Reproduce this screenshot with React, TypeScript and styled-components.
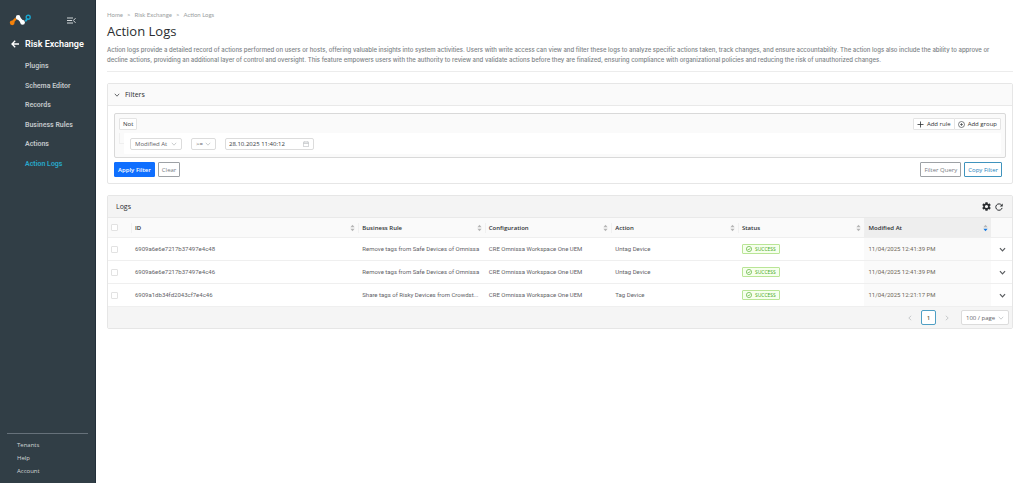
import React from "react";
import styled, { createGlobalStyle } from "styled-components";

const GlobalStyle = createGlobalStyle`
  *, *::before, *::after { box-sizing: border-box; }
  body { margin: 0; background: #fff; }
  body, button, input, select {
    font-family: "Open Sans", "Noto Sans", sans-serif;
    font-size: 6px;
    line-height: 10px;
    color: #5f6367;
  }
  button, input, select { margin: 0; cursor: pointer; }
  a { color: inherit; text-decoration: none; }
  svg { display: block; flex: none; }
`;

const Shell = styled.div`
  display: flex;
  min-height: 100vh;
`;

const Sidebar = styled.aside`
  display: flex;
  flex-direction: column;
  flex: none;
  width: 96px;
  padding: 14px 7px 7px;
  background: #313e46;
  border-right: 1px solid #23303a;
  color: #d3d7d9;
`;

const SidebarTop = styled.div`
  display: flex;
  align-items: center;
  justify-content: space-between;
  height: 12px;
  padding: 0 12px 0 2px;
`;

const IconButton = styled.button`
  display: flex;
  align-items: center;
  padding: 0;
  border: 0;
  background: none;
  color: inherit;
`;

const SectionLink = styled.a`
  display: flex;
  align-items: center;
  gap: 6px;
  height: 14px;
  margin-top: 11px;
  padding-left: 4px;
  font-family: Roboto, "Open Sans", sans-serif;
  font-size: 9px;
  line-height: 14px;
  font-weight: 600;
  color: #fff;
  white-space: nowrap;
`;

const NavList = styled.nav`
  display: flex;
  flex-direction: column;
  justify-content: space-between;
  height: 108px;
  margin-top: 10px;
  padding-left: 18px;
  font-family: Roboto, "Open Sans", sans-serif;
  font-size: 7px;
`;

const NavLink = styled.a<{ $active?: boolean }>`
  font-weight: 600;
  white-space: nowrap;
  color: ${(p) => (p.$active ? "#27a9cc" : "#c3c8cb")};
`;

const FooterNav = styled.nav`
  display: flex;
  flex-direction: column;
  gap: 3px;
  margin-top: auto;
  padding: 6px 10px 0;
  border-top: 1px solid #66717a;
`;

const Main = styled.main`
  flex: 1;
  min-width: 0;
  padding: 10px 11px;
`;

const Breadcrumb = styled.nav`
  display: flex;
  gap: 4px;
  font-family: Lato, "Open Sans", sans-serif;
  color: #9a9ea1;
`;

const Title = styled.h1`
  margin: 2px 0 5px;
  font-size: 13px;
  line-height: 18px;
  font-weight: 400;
  color: #2a2d30;
`;

const Description = styled.p`
  margin: 0;
  padding: 0 6px 6px 0;
  border-bottom: 1px solid #ececec;
  font-family: Inter, "Open Sans", sans-serif;
  font-weight: 500;
  color: #7b8185;
`;

const Panel = styled.section`
  margin-top: 11px;
  border: 1px solid #e6e6e6;
  border-radius: 2px;
  background: #fff;
`;

const PanelHeader = styled.header<{ $shade?: boolean }>`
  display: flex;
  align-items: center;
  justify-content: space-between;
  height: 22px;
  padding: 0 9px 0 ${(p) => (p.$shade ? "8px" : "6px")};
  border-bottom: 1px solid #e9e9e9;
  background: ${(p) => (p.$shade ? "#f4f4f4" : "#fafafa")};
  color: #2a2d30;
`;

const Toggle = styled.button`
  display: flex;
  align-items: center;
  gap: 5px;
  padding: 0;
  border: 0;
  background: none;
  color: #2a2d30;
`;

const PanelTitle = styled.h2`
  margin: 0;
  font-size: 7px;
  line-height: 10px;
  font-weight: 400;
`;

const FilterBody = styled.div`
  padding: 7px 6px 6px;
`;

const Builder = styled.div`
  padding: 4px 4px 3px;
  border: 1px solid #d9d9d9;
  border-radius: 2px;
  background: #fafafa;
`;

const Between = styled.div`
  display: flex;
  align-items: center;
  justify-content: space-between;
`;

const Group = styled.div<{ $gap?: number }>`
  display: flex;
  align-items: center;
  gap: ${(p) => p.$gap ?? 0}px;
`;

const SmallButton = styled.button`
  display: flex;
  align-items: center;
  gap: 3px;
  height: 12px;
  padding: 0 3px;
  border: 1px solid #e4e4e4;
  border-radius: 1px;
  background: #fff;
  color: #2f3235;
  white-space: nowrap;
  & + & { margin-left: -1px; }
`;

const RuleTree = styled.div`
  display: grid;
  grid-template-columns: 5px 1fr;
  margin-top: 3px;
`;

const Branch = styled.span`
  height: 11px;
  border-left: 1px solid #efefef;
  border-bottom: 1px solid #efefef;
`;

const Rule = styled.div`
  display: flex;
  align-items: center;
  gap: 9px;
  height: 21px;
  padding: 0 6px;
  border-radius: 1px;
  background: #fff;
`;

const Field = styled.label<{ $w: number; $tall?: boolean }>`
  display: grid;
  align-items: center;
  width: ${(p) => p.$w}px;
  height: ${(p) => (p.$tall ? 15 : 12)}px;
  border: 1px solid #dcdcdc;
  border-radius: 2px;
  background: #fff;
  color: #b4b7ba;
  & > * { grid-area: 1 / 1; }
  & > svg { justify-self: end; margin-right: 4px; pointer-events: none; }
`;

const control = `
  width: 100%;
  height: 10px;
  padding: 0 0 0 4px;
  border: 0;
  outline: 0;
  background: none;
  appearance: none;
`;

const Select = styled.select`${control}`;
const Input = styled.input`${control} padding-left: 3px; color: #35393d;`;

const ActionBar = styled(Between)`
  margin-top: 4px;
  padding-right: 4px;
`;

const tones = {
  primary: "background: #0f6fff; border-color: #0f6fff; color: #fff; font-weight: 600;",
  plain: "background: #fff; border-color: #9da1a5; color: #777b7f;",
  accent: "background: #fff; border-color: #3f93bd; color: #1c7fbd; font-weight: 500;",
};

const Button = styled.button<{ $tone: keyof typeof tones }>`
  height: 15px;
  padding: 0 3px;
  border: 1px solid;
  border-radius: 1px;
  white-space: nowrap;
  ${(p) => tones[p.$tone]}
`;

const Table = styled.table`
  width: 100%;
  table-layout: fixed;
  border-collapse: separate;
  border-spacing: 0;
`;

const Col = styled.col<{ $w?: string }>`
  width: ${(p) => p.$w ?? "auto"};
`;

const Th = styled.th<{ $sorted?: boolean }>`
  height: 20px;
  padding: 0 3px 0 0;
  border-bottom: 1px solid #efefef;
  background: ${(p) => (p.$sorted ? "#eeeeee" : "#fafafa")};
  font-weight: 600;
  text-align: left;
  color: #303336;
  &:first-child { padding-left: 3px; }
`;

const HeadCell = styled(Between)`
  height: 10px;
  padding-left: 3px;
  border-left: 1px solid #f0f0f0;
`;

const Td = styled.td<{ $sorted?: boolean }>`
  height: 23px;
  padding: 0 3px 0 4px;
  border-bottom: 1px solid #efefef;
  background: ${(p) => (p.$sorted ? "#fafafa" : "#fff")};
  font-family: Roboto, "Open Sans", sans-serif;
  color: ${(p) => (p.$sorted ? "#6e6759" : "#5f6367")};
  overflow: hidden;
  text-overflow: ellipsis;
  white-space: nowrap;
  &:first-child { padding-left: 3px; }
`;

const Check = styled.input.attrs({ type: "checkbox" })`
  display: block;
  width: 7px;
  height: 7px;
  appearance: none;
  border: 1px solid #e2e2e2;
  border-radius: 1px;
  background: #fff;
`;

const Expand = styled(IconButton)`
  width: 100%;
  height: 10px;
  justify-content: center;
  color: #5a5d60;
`;

const Tag = styled.span`
  display: flex;
  align-items: center;
  gap: 3px;
  width: max-content;
  height: 10px;
  padding: 0 3px;
  border: 1px solid #b9e596;
  border-radius: 1px;
  background: #f6ffed;
  font-family: "Open Sans", sans-serif;
  font-size: 5px;
  line-height: 8px;
  color: #47a820;
`;

const Pager = styled.footer`
  display: flex;
  align-items: center;
  justify-content: flex-end;
  gap: 11px;
  height: 21px;
  padding-right: 3px;
  background: #f5f5f5;
  color: #b4b7ba;
`;

const PageButton = styled.button`
  width: 15px;
  height: 15px;
  padding: 0;
  border: 1px solid #4f9fc4;
  border-radius: 2px;
  background: #fff;
  font-weight: 600;
  color: #6b5f45;
`;

const Logo = () => (
  <svg width="22" height="12" viewBox="0 0 22 12" fill="none" aria-label="Company logo">
    <circle cx="3.2" cy="8.8" r="2.4" fill="#f5820b" />
    <path d="M4 7.7 6.2 5.3" stroke="#f5820b" strokeWidth="2.4" strokeLinecap="round" />
    <path d="M9.2 3.5 13.6 8.3" stroke="#fff" strokeWidth="3.2" strokeLinecap="round" />
    <circle cx="9.1" cy="3.4" r="2.3" fill="#fff" />
    <circle cx="13.6" cy="8.4" r="2.3" fill="#fff" />
    <path d="M16.9 6.7 18 5.2" stroke="#1ba6cf" strokeWidth="2" strokeLinecap="round" />
    <circle cx="19.2" cy="3.2" r="2" stroke="#1ba6cf" strokeWidth="1.4" />
  </svg>
);

const MenuFold = () => (
  <svg width="9" height="7" viewBox="0 0 9 7" fill="none" stroke="currentColor">
    <path d="M0 1h6M0 3.5h5M0 6h6M8.5 1.2 6.3 3.5l2.2 2.3" />
  </svg>
);

const ArrowLeft = () => (
  <svg width="8" height="8" viewBox="0 0 8 8" fill="none" stroke="currentColor" strokeWidth="1.3">
    <path d="M8 4H1M4.2.8 1 4l3.2 3.2" />
  </svg>
);

const Chevron = ({ turn = 0, weight = 0.7, size = 6 }: { turn?: number; weight?: number; size?: number }) => (
  <svg width={size} height={size} viewBox="0 0 6 6" fill="none" stroke="currentColor" strokeWidth={weight}>
    <path d="M.8 1.8 3 4.2l2.2-2.4" transform={`rotate(${turn} 3 3)`} />
  </svg>
);

const Plus = () => (
  <svg width="7" height="7" viewBox="0 0 7 7" stroke="currentColor" strokeWidth=".8">
    <path d="M3.5.5v6M.5 3.5h6" />
  </svg>
);

const PlusCircle = () => (
  <svg width="7" height="7" viewBox="0 0 7 7" fill="none" stroke="currentColor" strokeWidth=".6">
    <circle cx="3.5" cy="3.5" r="3" />
    <path d="M3.5 2v3M2 3.5h3" />
  </svg>
);

const CheckCircle = () => (
  <svg width="6" height="6" viewBox="0 0 6 6" fill="none" stroke="currentColor" strokeWidth=".6">
    <circle cx="3" cy="3" r="2.6" />
    <path d="m1.8 3 .9 1 1.5-1.8" />
  </svg>
);

const Calendar = () => (
  <svg width="6" height="6" viewBox="0 0 6 6" fill="none" stroke="currentColor" strokeWidth=".6">
    <path d="M.4 1h5.2v4.6H.4zM.4 2.5h5.2M1.8.2v1.4M4.2.2v1.4" />
  </svg>
);

const Gear = () => (
  <svg width="9" height="9" viewBox="2 2 20 20" fill="currentColor">
    <path d="M19.14 12.94c.04-.3.06-.61.06-.94s-.02-.64-.07-.94l2.03-1.58a.49.49 0 0 0 .12-.61l-1.92-3.32a.49.49 0 0 0-.59-.22l-2.39.96a7 7 0 0 0-1.62-.94l-.36-2.54a.48.48 0 0 0-.48-.41h-3.84a.48.48 0 0 0-.47.41l-.36 2.54c-.59.24-1.13.57-1.62.94l-2.39-.96a.48.48 0 0 0-.59.22L2.74 8.87a.48.48 0 0 0 .12.61l2.03 1.58c-.05.3-.09.63-.09.94s.02.64.07.94l-2.03 1.58a.49.49 0 0 0-.12.61l1.92 3.32c.12.22.37.29.59.22l2.39-.96c.5.38 1.03.7 1.62.94l.36 2.54c.05.24.24.41.48.41h3.84c.24 0 .44-.17.47-.41l.36-2.54a7 7 0 0 0 1.62-.94l2.39.96c.22.08.47 0 .59-.22l1.92-3.32a.48.48 0 0 0-.12-.61zM12 15.6a3.6 3.6 0 1 1 0-7.2 3.6 3.6 0 0 1 0 7.2z" />
  </svg>
);

const Refresh = () => (
  <svg width="8" height="8" viewBox="0 0 8 8" fill="none" stroke="currentColor">
    <path d="M6.6 2.2A3.2 3.2 0 1 0 7.1 4.9" />
    <path d="M7.7.6v2.9H4.8z" fill="currentColor" stroke="none" />
  </svg>
);

const Sorter = ({ down }: { down?: boolean }) => (
  <svg width="5" height="8" viewBox="0 0 5 8">
    <path d="M2.5.8 4.6 3.2H.4z" fill="#b5b5b5" />
    <path d="M2.5 7.2.4 4.8h4.2z" fill={down ? "#1478e0" : "#b5b5b5"} />
  </svg>
);

const navItems = ["Plugins", "Schema Editor", "Records", "Business Rules", "Actions", "Action Logs"];
const columns = ["ID", "Business Rule", "Configuration", "Action", "Status", "Modified At"];
const logs = [
  { id: "6909a6e6e7217b37497e4c48", rule: "Remove tags from Safe Devices of Omnissa", action: "Untag Device", time: "11/04/2025 12:41:39 PM" },
  { id: "6909a6e6e7217b37497e4c46", rule: "Remove tags from Safe Devices of Omnissa", action: "Untag Device", time: "11/04/2025 12:41:39 PM" },
  { id: "6909a1db34fd2043cf7e4c46", rule: "Share tags of Risky Devices from Crowdst...", action: "Tag Device", time: "11/04/2025 12:21:17 PM" },
];

export default function App() {
  return (
    <>
      <GlobalStyle />
      <Shell>
        <Sidebar>
          <SidebarTop>
            <Logo />
            <IconButton aria-label="Collapse menu"><MenuFold /></IconButton>
          </SidebarTop>
          <SectionLink href="#"><ArrowLeft />Risk Exchange</SectionLink>
          <NavList>
            {navItems.map((item) => (
              <NavLink key={item} href="#" $active={item === "Action Logs"}>{item}</NavLink>
            ))}
          </NavList>
          <FooterNav>
            <a href="#">Tenants</a>
            <a href="#">Help</a>
            <a href="#">Account</a>
          </FooterNav>
        </Sidebar>

        <Main>
          <Breadcrumb>
            <a href="#">Home</a><span>&gt;</span>
            <a href="#">Risk Exchange</a><span>&gt;</span>
            <a href="#">Action Logs</a>
          </Breadcrumb>
          <Title>Action Logs</Title>
          <Description>
            Action logs provide a detailed record of actions performed on users or hosts, offering valuable insights into
            system activities. Users with write access can view and filter these logs to analyze specific actions taken,
            track changes, and ensure accountability. The action logs also include the ability to approve or decline
            actions, providing an additional layer of control and oversight. This feature empowers users with the
            authority to review and validate actions before they are finalized, ensuring compliance with organizational
            policies and reducing the risk of unauthorized changes.
          </Description>

          <Panel>
            <PanelHeader>
              <Toggle><Chevron /><PanelTitle as="span">Filters</PanelTitle></Toggle>
            </PanelHeader>
            <FilterBody>
              <Builder>
                <Between>
                  <SmallButton>Not</SmallButton>
                  <Group>
                    <SmallButton><Plus />Add rule</SmallButton>
                    <SmallButton><PlusCircle />Add group</SmallButton>
                  </Group>
                </Between>
                <RuleTree>
                  <Branch />
                  <Rule>
                    <Field $w={52}>
                      <Select aria-label="Field"><option>Modified At</option></Select>
                      <Chevron />
                    </Field>
                    <Field $w={25}>
                      <Select aria-label="Operator"><option>&gt;=</option></Select>
                      <Chevron />
                    </Field>
                    <Field $w={89}>
                      <Input aria-label="Value" defaultValue="28.10.2025 11:40:12" />
                      <Calendar />
                    </Field>
                  </Rule>
                </RuleTree>
              </Builder>
              <ActionBar>
                <Group $gap={3}>
                  <Button $tone="primary">Apply Filter</Button>
                  <Button $tone="plain">Clear</Button>
                </Group>
                <Group $gap={3}>
                  <Button $tone="plain">Filter Query</Button>
                  <Button $tone="accent">Copy Filter</Button>
                </Group>
              </ActionBar>
            </FilterBody>
          </Panel>

          <Panel>
            <PanelHeader $shade>
              <PanelTitle>Logs</PanelTitle>
              <Group $gap={4}>
                <IconButton aria-label="Settings"><Gear /></IconButton>
                <IconButton aria-label="Refresh"><Refresh /></IconButton>
              </Group>
            </PanelHeader>
            <Table>
              <colgroup>
                <Col $w="23px" />
                <Col />
                {columns.slice(1).map((c) => <Col key={c} $w="14%" />)}
                <Col $w="21px" />
              </colgroup>
              <thead>
                <tr>
                  <Th><Check aria-label="Select all" /></Th>
                  {columns.map((c) => (
                    <Th key={c} $sorted={c === "Modified At"}>
                      <HeadCell>{c}<Sorter down={c === "Modified At"} /></HeadCell>
                    </Th>
                  ))}
                  <Th />
                </tr>
              </thead>
              <tbody>
                {logs.map((log) => (
                  <tr key={log.id}>
                    <Td><Check aria-label={`Select ${log.id}`} /></Td>
                    <Td>{log.id}</Td>
                    <Td>{log.rule}</Td>
                    <Td>CRE Omnissa Workspace One UEM</Td>
                    <Td>{log.action}</Td>
                    <Td><Tag><CheckCircle />SUCCESS</Tag></Td>
                    <Td $sorted>{log.time}</Td>
                    <Td><Expand aria-label="Expand row"><Chevron weight={1} size={7} /></Expand></Td>
                  </tr>
                ))}
              </tbody>
            </Table>
            <Pager>
              <Group $gap={8}>
                <IconButton aria-label="Previous page"><Chevron turn={90} /></IconButton>
                <PageButton>1</PageButton>
                <IconButton aria-label="Next page"><Chevron turn={-90} /></IconButton>
              </Group>
              <Field $w={48} $tall>
                <Select aria-label="Page size"><option>100 / page</option></Select>
                <Chevron />
              </Field>
            </Pager>
          </Panel>
        </Main>
      </Shell>
    </>
  );
}
